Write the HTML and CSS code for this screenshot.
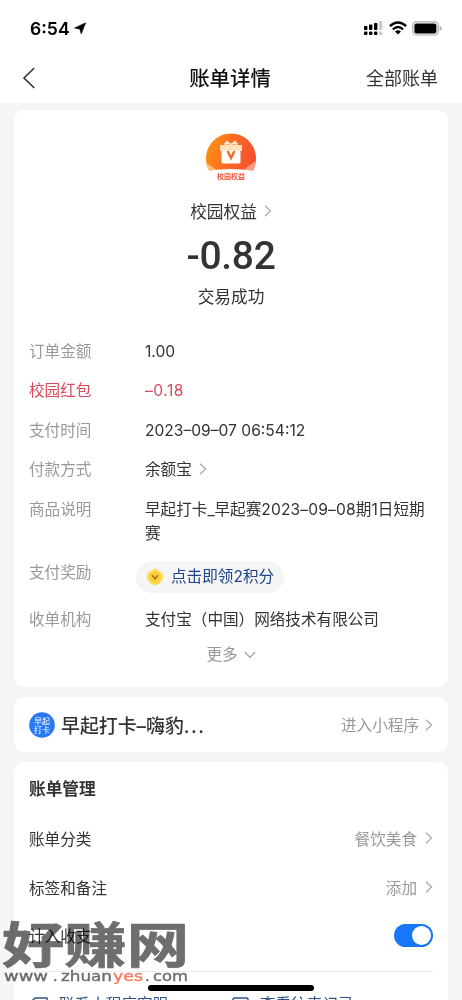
FILE: index.html
```html
<!DOCTYPE html>
<html lang="zh-CN">
<head>
<meta charset="utf-8">
<title>账单详情</title>
<link rel="stylesheet" href="styles.css">
</head>
<body>
<div class="screen">
  <header class="top">
    <div class="status">
      <div class="clock">6:54
        <svg width="12" height="13" viewBox="0 0 13 13"><path d="M12.6.4 7.8 12.4 6.4 7.2.6 6z" fill="#000" stroke="#000" stroke-width=".6" stroke-linejoin="round"/></svg>
      </div>
      <div class="signals">
        <svg width="20" height="15" viewBox="0 0 20 15">
          <g fill="#000"><rect x="1" y="5" width="3.4" height="4" rx=".8"/><rect x="6" y="3.5" width="3.4" height="5.5" rx=".8"/><rect x="11" y="2" width="3.4" height="7" rx=".8"/><rect x="1" y="10.5" width="3.4" height="3.6" rx="1"/><rect x="6" y="10.5" width="3.4" height="3.6" rx="1"/><rect x="11" y="10.5" width="3.4" height="3.6" rx="1"/></g>
          <g fill="#ccc"><rect x="16" y="0" width="3.4" height="9" rx=".8"/><rect x="16" y="10.5" width="3.4" height="3.6" rx="1"/></g>
        </svg>
        <svg class="wifi" width="18" height="14" viewBox="0 0 18 14"><g fill="none" stroke="#000" stroke-width="2.4"><path d="M.9 5.1Q9-2.3 17.1 5.1"/><path d="M3.9 8.3Q9 3.7 14.1 8.3"/></g><path d="M6 10.4Q9 8 12 10.4L9 13.5z"/></svg>
        <svg class="battery" width="30" height="15" viewBox="0 0 30 15"><rect x=".8" y=".8" width="25.4" height="13.2" rx="3.6" fill="#fff" stroke="#aaa" stroke-width="1.2"/><rect x="2.4" y="2.4" width="22" height="10" rx="2"/><path d="M27.6 5q2 .4 2 2.4t-2 2.4z" fill="#aaa"/></svg>
      </div>
    </div>
    <nav class="nav">
      <svg width="14" height="22" viewBox="0 0 14 22"><path d="M12.3 1 2 11l10.3 10" fill="none" stroke="#333" stroke-width="1.6"/></svg>
      <h1 class="nav-title">账单详情</h1>
      <span class="nav-all">全部账单</span>
    </nav>
  </header>

  <main class="cards">
    <section class="card bill">
      <svg class="merchant-logo" width="52" height="52" viewBox="0 0 52 52">
        <defs>
          <linearGradient id="sun" x1="0" y1="0" x2="1" y2=".3"><stop offset="0" stop-color="#ff9a12"/><stop offset=".55" stop-color="#fa6a25"/><stop offset="1" stop-color="#f4502f"/></linearGradient>
          <clipPath id="dome"><path d="M4.1 37.5A25 25 0 1 1 47.9 37.5Q26 34.5 4.1 37.5z"/></clipPath>
        </defs>
        <g clip-path="url(#dome)"><rect width="52" height="52" fill="url(#sun)"/><path d="M0 29 16 40H0z" fill="#ffc07c"/><path d="M52 27 34 40h18z" fill="#ff9a7e"/></g>
        <path d="M15 12h22v6H15z" fill="#ffe2b8"/><path d="M16.5 17.5h19V29q0 1.5-1.5 1.5H18q-1.5 0-1.5-1.5z" fill="#fff"/>
        <path d="m19.5 11.5 2.3-3 4.2 3 4.2-3 2.3 3" fill="#ffe9cc" stroke="#ffe9cc" stroke-width="1.4"/>
        <path d="m22.6 18 3.4 7 3.4-7" fill="none" stroke="#f56a25" stroke-width="2.4"/>
        <text x="12" y="46.3" textLength="28" lengthAdjust="spacingAndGlyphs" class="logo-caption">校园权益</text>
      </svg>
      <div class="merchant">校园权益 <svg class="chev" width="8" height="12" viewBox="0 0 8 12"><path d="m1 .8 5.5 5.2L1 11.2"/></svg></div>
      <div class="amount">-0.82</div>
      <div class="result">交易成功</div>
      <dl class="details">
        <div class="row"><dt>订单金额</dt><dd>1.00</dd></div>
        <div class="row red"><dt>校园红包</dt><dd>–0.18</dd></div>
        <div class="row"><dt>支付时间</dt><dd class="date">2023–09–07 06:54:12</dd></div>
        <div class="row"><dt>付款方式</dt><dd>余额宝 <svg class="chev pay" width="8" height="12" viewBox="0 0 8 12"><path d="m1 .8 5.5 5.2L1 11.2"/></svg></dd></div>
        <div class="row"><dt>商品说明</dt><dd>早起打卡_早起赛<span class="goods-date">2023–09–08</span>期1日短期<br>赛</dd></div>
        <div class="row reward"><dt>支付奖励</dt><dd><span class="pill">
          <svg width="18" height="18" viewBox="0 0 18 18"><path d="M9 .7 11.5 2.7 15.8 5l1 5-3.1 5L9 16.8 4.3 15 1.2 10l1-5 4.3-2.3z" fill="#ffdc50" stroke="#ffdc50" stroke-linejoin="round"/><circle cx="9" cy="9" r="5.5" fill="#fbcd3b"/><path d="m6 7.2 3 3.6 3-3.6" fill="none" stroke="#a77418" stroke-width="1.5"/></svg>
          点击即领2积分</span></dd></div>
        <div class="row"><dt>收单机构</dt><dd>支付宝（中国）网络技术有限公司</dd></div>
      </dl>
      <div class="more">更多 <svg class="chev" width="12" height="8" viewBox="0 0 12 8"><path d="m.8 1 5.2 5.5L11.2 1"/></svg></div>
    </section>

    <section class="card mini">
      <svg width="26" height="26" viewBox="0 0 26 26"><circle cx="13" cy="13" r="12.8" fill="#2879f5"/><text x="5" y="12" class="badge-text" textLength="16">早起</text><text x="5" y="20.5" class="badge-text" textLength="16">打卡</text></svg>
      <strong class="mini-name">早起打卡–嗨豹<span class="dots">...</span></strong>
      <span class="link">进入小程序</span>
      <svg class="chev" width="8" height="12" viewBox="0 0 8 12"><path d="m1 .8 5.5 5.2L1 11.2"/></svg>
    </section>

    <section class="card manage">
      <h2 class="manage-title">账单管理</h2>
      <div class="option"><span>账单分类</span><span class="value">餐饮美食<svg class="chev" width="8" height="12" viewBox="0 0 8 12"><path d="m1 .8 5.5 5.2L1 11.2"/></svg></span></div>
      <div class="option"><span>标签和备注</span><span class="value">添加<svg class="chev" width="8" height="12" viewBox="0 0 8 12"><path d="m1 .8 5.5 5.2L1 11.2"/></svg></span></div>
      <div class="option last"><span>计入收支</span><span class="switch"><span class="knob"></span></span></div>
      <div class="actions">
        <div class="action"><svg width="17" height="17" viewBox="0 0 17 17"><path d="M4 1h12v12H1V4z" fill="none" stroke="#30508a" stroke-width="1.5"/></svg>联系小程序客服</div>
        <div class="action"><svg width="17" height="17" viewBox="0 0 17 17"><rect x="1" y="1" width="15" height="14" rx="1.5" fill="none" stroke="#30508a" stroke-width="1.5"/></svg>查看往来记录</div>
      </div>
    </section>
  </main>

  <svg class="watermark" width="190" height="66" viewBox="0 0 190 66">
    <text transform="translate(2 43.4) scale(1 .91)" x="0" y="0" class="wm-main" textLength="187" lengthAdjust="spacingAndGlyphs">好赚网</text>
    <g class="wm-url">
      <text x="4" y="60.5" textLength="44" lengthAdjust="spacingAndGlyphs">www</text>
      <text x="53" y="60.5">.</text>
      <text x="61" y="60.5" textLength="51" lengthAdjust="spacingAndGlyphs">zhuan</text>
      <text x="113" y="60.5" class="wm-accent" textLength="30" lengthAdjust="spacingAndGlyphs">yes</text>
      <text x="145" y="60.5">.</text>
      <text x="153" y="60.5" textLength="35" lengthAdjust="spacingAndGlyphs">com</text>
    </g>
  </svg>
  <div class="home-bar"></div>
</div>
</body>
</html>
```
FILE: styles.css
```css
* { box-sizing: border-box; }
body { margin: 0; background: #f5f5f5; color: #333; font-family: Inter, "Noto Sans CJK SC", sans-serif; font-size: 15.6px; }
svg { display: block; flex: none; }
h1, h2, dl, dd { margin: 0; }
.screen { position: relative; width: 462px; height: 1000px; overflow: hidden; }

.top { height: 103px; background: #fff; }
.status { height: 53px; padding: 2px 20px 0 30px; display: flex; justify-content: space-between; align-items: center; color: #000; }
.clock { display: flex; align-items: center; gap: 4px; padding-top: 1px; font-size: 17.6px; font-weight: 600; }
.signals { display: flex; align-items: center; padding-top: 1px; }
.wifi { margin-left: 6px; }
.battery { margin-left: 5px; }
.nav { height: 50px; padding: 0 24px 0 22px; display: grid; grid-template-columns: 1fr auto 1fr; align-items: center; }
.nav-title { font-size: 20.4px; line-height: 30px; padding-top: 2px; font-weight: 500; color: #111; }
.nav-all { justify-self: end; font-size: 18px; line-height: 30px; padding-top: 2px; }

.cards { padding: 7px 14px 0; display: flex; flex-direction: column; gap: 10px; }
.card { background: #fff; border-radius: 10px; }
.chev { fill: none; stroke: #aaa; stroke-width: 1.3; }

.bill { height: 577px; padding-top: 24px; display: flex; flex-direction: column; align-items: center; }
.logo-caption { font-size: 7px; font-weight: 700; fill: #ee5940; }
.merchant-logo { margin-top: -1px; }
.merchant { height: 30px; margin-top: 11px; display: flex; align-items: center; gap: 7px; font-size: 16.7px; }
.amount { height: 56px; line-height: 60px; font-family: Roboto, sans-serif; font-size: 39px; font-weight: 500; letter-spacing: -.3px; }
.result { height: 30px; line-height: 31px; font-size: 16.7px; }
.details { align-self: stretch; margin-top: 28px; padding-left: 15px; }
.row { display: flex; min-height: 24px; line-height: 24.4px; margin-bottom: 15px; }
.row dt { width: 116px; flex: none; color: #999; }
.row dd { display: block; white-space: nowrap; }
.row.red dt, .row.red dd { color: #dc4b5c; }
.row.red dd { letter-spacing: .5px; }
.date { letter-spacing: 0; }
.goods-date { letter-spacing: .15px; }
.pay { display: inline-block; margin-left: 3px; }
.reward { height: 32px; margin-bottom: 15px; }
.reward dt { line-height: 24px; }
.pill { display: flex; align-items: center; gap: 7px; height: 32px; margin-left: -9px; padding: 0 10px; border-radius: 16px; background: #f5f5f5; color: #1d438a; }
.more { display: flex; align-items: center; gap: 6px; height: 20px; color: #999; margin-top: -5px; }
.more .chev { margin-top: 5px; }

.mini { height: 55px; padding: 0 15px; display: flex; align-items: center; }
.badge-text { font-size: 8px; fill: #fff; }
.mini-name { flex: 1; margin-left: 6px; padding-bottom: 1px; font-size: 18.9px; font-weight: 500; }
.dots { letter-spacing: 1.5px; }
.link { margin-right: 6px; padding-bottom: 1px; color: #999; }

.manage { height: 260px; padding: 0 15px; }
.manage-title { height: 51px; line-height: 55px; font-size: 16.7px; font-weight: 600; }
.option { height: 49px; display: flex; align-items: center; justify-content: space-between; }
.last { height: 48px; }
.value { display: flex; align-items: center; gap: 8px; color: #999; }
.switch { width: 39px; height: 23px; padding: 2px; border-radius: 12px; background: #1777f8; display: flex; justify-content: flex-end; }
.knob { width: 19px; height: 19px; border-radius: 50%; background: #fff; }
.actions { margin-top: 12px; border-top: 1px solid #eee; padding: 21px 0 0 2px; display: grid; grid-template-columns: 201px 1fr; color: #30508a; }
.action { display: flex; align-items: center; gap: 11px; line-height: 24px; }

.watermark { position: absolute; left: 0; top: 920px; overflow: visible; mix-blend-mode: multiply; }
.wm-main { font-size: 54px; font-weight: 700; fill: #6e6e6e; stroke: #6e6e6e; stroke-width: .8; stroke-linejoin: round; }
.wm-url { font-family: "DejaVu Sans", sans-serif; font-size: 14.5px; fill: #6d6d6d; stroke: #6d6d6d; stroke-width: .4; }
.wm-accent { fill: #f67b5d; stroke: #f67b5d; }
.home-bar { position: absolute; left: 148px; top: 985px; width: 166px; height: 6px; border-radius: 3px; background: #000; }
```
